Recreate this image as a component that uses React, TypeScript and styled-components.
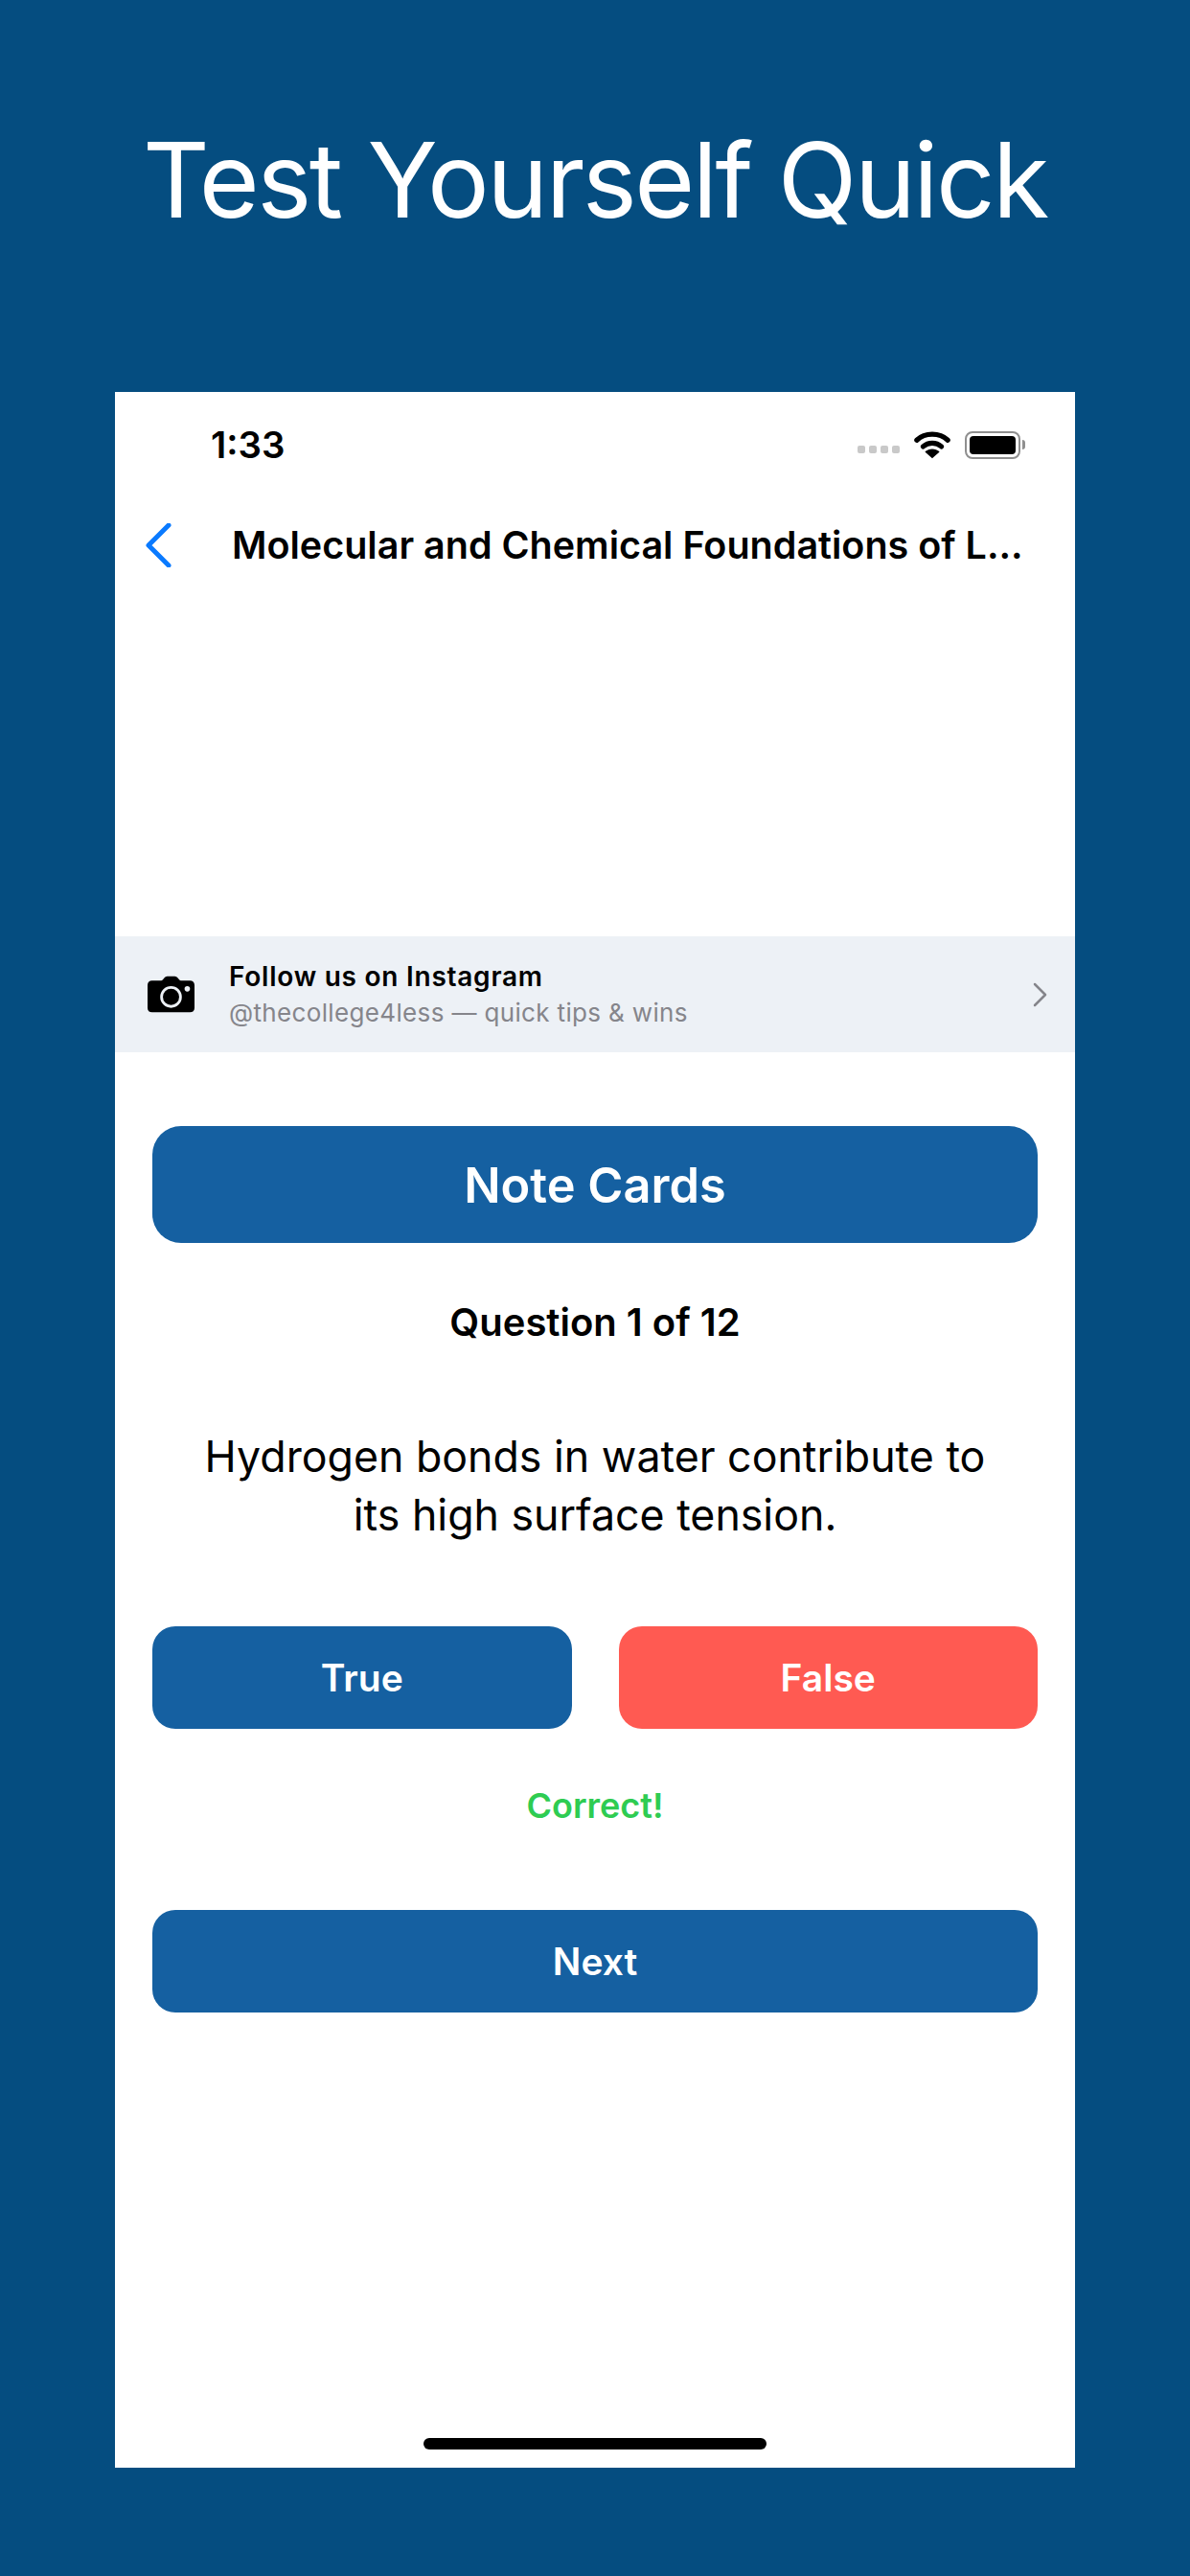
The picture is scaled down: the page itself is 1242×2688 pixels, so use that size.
import React from "react";
import styled, { createGlobalStyle } from "styled-components";

const GlobalStyle = createGlobalStyle`
  html, body {
    margin: 0;
    padding: 0;
    background: #054d80;
  }
  * {
    box-sizing: border-box;
  }
`;

const App: React.FC = () => {
  return (
    <Page>
      <GlobalStyle />
      <Headline>Test Yourself Quick</Headline>
      <Screen>
        <StatusBar>
          <Time>1:33</Time>
          <StatusIcons>
            <SignalDots>
              <Dot />
              <Dot />
              <Dot />
              <Dot />
            </SignalDots>
            <svg width="38" height="30" viewBox="0 0 40 30">
              <path d="M3 10C12 1.5 28 1.5 37 10" fill="none" stroke="#000" strokeWidth="5.5" strokeLinecap="round" />
              <path d="M10 17C15.5 12 24.5 12 30 17" fill="none" stroke="#000" strokeWidth="5.5" strokeLinecap="round" />
              <path d="M20 30L12 23C16.5 18.5 23.5 18.5 28 23Z" fill="#000" />
            </svg>
            <Battery>
              <BatteryFill />
            </Battery>
          </StatusIcons>
        </StatusBar>
        <NavBar>
          <svg width="30" height="46" viewBox="0 0 30 46">
            <path d="M25 2L4 23L25 44" fill="none" stroke="#0a7aff" strokeWidth="5" strokeLinecap="round" strokeLinejoin="round" transform="translate(1 0)" />
          </svg>
          <NavTitle>Molecular and Chemical Foundations of L...</NavTitle>
        </NavBar>
        <AdSpace />
        <Banner>
          <svg width="49" height="39" viewBox="0 0 52 40">
            <path
              d="M5 5H14C16 5 17 4 18 2.5C19 1 20 0 22 0H30C32 0 33 1 34 2.5C35 4 36 5 38 5H47C50 5 52 7 52 10V35C52 38 50 40 47 40H5C2 40 0 38 0 35V10C0 7 2 5 5 5Z"
              fill="#000"
            />
            <circle cx="26" cy="23" r="10.5" fill="none" stroke="#edf1f6" strokeWidth="3" />
            <circle cx="44" cy="14" r="3" fill="#edf1f6" />
          </svg>
          <BannerText>
            <BannerTitle>Follow us on Instagram</BannerTitle>
            <BannerSub>@thecollege4less — quick tips &amp; wins</BannerSub>
          </BannerText>
          <svg width="16" height="26" viewBox="0 0 16 26">
            <path d="M2 2L13 13L2 24" fill="none" stroke="#85858b" strokeWidth="2.5" strokeLinecap="round" strokeLinejoin="round" />
          </svg>
        </Banner>
        <Content>
          <NoteCards>Note Cards</NoteCards>
          <QuestionCount>Question 1 of 12</QuestionCount>
          <Statement>
            Hydrogen bonds in water contribute to
            <br />
            its high surface tension.
          </Statement>
          <Answers>
            <ActionButton $color="#1560a1">True</ActionButton>
            <ActionButton $color="#ff5a52">False</ActionButton>
          </Answers>
          <Feedback>Correct!</Feedback>
          <ActionButton $color="#1560a1">Next</ActionButton>
        </Content>
        <HomeIndicator />
      </Screen>
    </Page>
  );
};

const fontStack = `Inter, "Liberation Sans", sans-serif`;

const Page = styled.div`
  width: 1242px;
  height: 2688px;
  background: #054d80;
  font-family: ${fontStack};
  overflow: hidden;
`;

const Headline = styled.h1`
  margin: 0;
  height: 409px;
  padding-top: 118px;
  text-align: center;
  color: #ffffff;
  font-size: 108px;
  line-height: 140px;
  font-weight: 400;
  letter-spacing: -2.5px;
  white-space: nowrap;
`;

const Screen = styled.div`
  position: relative;
  width: 1002px;
  height: 2166px;
  margin: 0 auto;
  background: #ffffff;
`;

const StatusBar = styled.div`
  height: 110px;
  padding: 0 57px 0 100px;
  display: flex;
  align-items: center;
  justify-content: space-between;
`;

const Time = styled.div`
  font-size: 38.5px;
  font-weight: 600;
  color: #000000;
`;

const StatusIcons = styled.div`
  display: flex;
  align-items: center;
  gap: 15px;
`;

const SignalDots = styled.div`
  display: flex;
  gap: 4px;
  margin-top: 10px;
`;

const Dot = styled.span`
  width: 8px;
  height: 8px;
  border-radius: 2px;
  background: #c9c9c9;
`;

const Battery = styled.div`
  position: relative;
  width: 58px;
  height: 29px;
  padding: 3px;
  border: 2px solid #8f8f8f;
  border-radius: 8px;

  &::after {
    content: "";
    position: absolute;
    right: -7px;
    top: 7px;
    width: 3px;
    height: 10px;
    background: #8f8f8f;
    border-radius: 0 3px 3px 0;
  }
`;

const BatteryFill = styled.div`
  width: 100%;
  height: 100%;
  background: #000000;
  border-radius: 4px;
`;

const NavBar = styled.div`
  height: 100px;
  padding: 0 54px 0 30px;
  display: flex;
  align-items: center;
  gap: 62px;
`;

const NavTitle = styled.div`
  font-size: 39.5px;
  font-weight: 600;
  color: #000000;
  white-space: nowrap;
`;

const AdSpace = styled.div`
  height: 358px;
`;

const Banner = styled.div`
  height: 121px;
  padding: 0 28px 0 34px;
  display: flex;
  align-items: center;
  background: #edf1f6;
`;

const BannerText = styled.div`
  flex: 1;
  margin-left: 36px;
  display: flex;
  flex-direction: column;
  gap: 5px;
`;

const BannerTitle = styled.div`
  font-size: 28px;
  line-height: 34px;
  font-weight: 600;
  letter-spacing: 0.75px;
  color: #000000;
`;

const BannerSub = styled.div`
  font-size: 26px;
  line-height: 32px;
  letter-spacing: 0.35px;
  color: #85858b;
`;

const Content = styled.div`
  padding: 77px 39px 0;
  display: flex;
  flex-direction: column;
`;

const NoteCards = styled.div`
  height: 122px;
  border-radius: 30px;
  background: #1560a1;
  color: #ffffff;
  font-size: 50.5px;
  font-weight: 600;
  display: flex;
  align-items: center;
  justify-content: center;
`;

const QuestionCount = styled.div`
  margin-top: 58px;
  height: 50px;
  font-size: 40px;
  line-height: 50px;
  font-weight: 600;
  text-align: center;
  color: #000000;
`;

const Statement = styled.div`
  margin-top: 85px;
  font-size: 44.7px;
  line-height: 61px;
  text-align: center;
  color: #000000;
`;

const Answers = styled.div`
  margin-top: 85px;
  display: grid;
  grid-template-columns: 1fr 1fr;
  gap: 49px;
`;

const ActionButton = styled.div<{ $color: string }>`
  height: 107px;
  border-radius: 24px;
  background: ${(p) => p.$color};
  color: #ffffff;
  font-size: 39px;
  font-weight: 600;
  display: flex;
  align-items: center;
  justify-content: center;
`;

const Feedback = styled.div`
  margin: 55px 0 84px;
  height: 50px;
  font-size: 36px;
  line-height: 50px;
  font-weight: 600;
  text-align: center;
  color: #2ecc52;
`;

const HomeIndicator = styled.div`
  position: absolute;
  left: 322px;
  bottom: 19px;
  width: 358px;
  height: 12px;
  border-radius: 6px;
  background: #000000;
`;

export default App;
